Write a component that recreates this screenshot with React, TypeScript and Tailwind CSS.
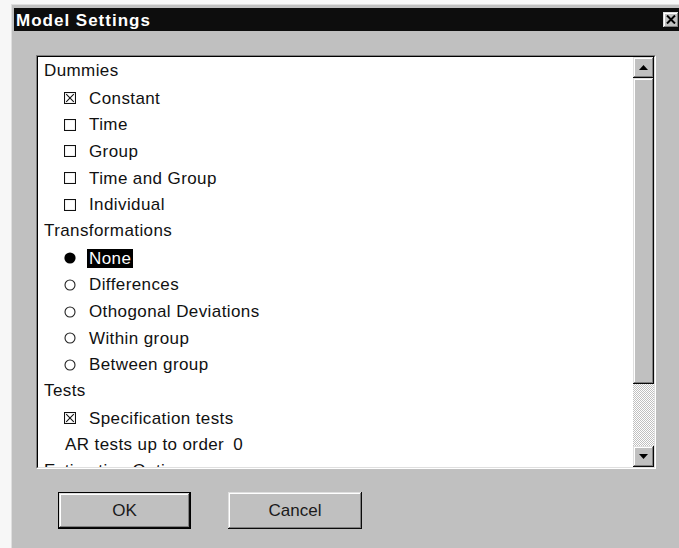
import React from "react";

type Row =
  | { kind: "head"; text: string }
  | { kind: "check"; text: string; on?: boolean }
  | { kind: "radio"; text: string; on?: boolean }
  | { kind: "order"; text: string; value: string };

const rows: Row[] = [
  { kind: "head", text: "Dummies" },
  { kind: "check", text: "Constant", on: true },
  { kind: "check", text: "Time" },
  { kind: "check", text: "Group" },
  { kind: "check", text: "Time and Group" },
  { kind: "check", text: "Individual" },
  { kind: "head", text: "Transformations" },
  { kind: "radio", text: "None", on: true },
  { kind: "radio", text: "Differences" },
  { kind: "radio", text: "Othogonal Deviations" },
  { kind: "radio", text: "Within group" },
  { kind: "radio", text: "Between group" },
  { kind: "head", text: "Tests" },
  { kind: "check", text: "Specification tests", on: true },
  { kind: "order", text: "AR tests up to order", value: "0" },
  { kind: "head", text: "Estimation Options" },
];

const raised =
  "bg-[#c0c0c0] shadow-[inset_-1px_-1px_#0a0a0a,inset_1px_1px_#dfdfdf,inset_-2px_-2px_#808080,inset_2px_2px_#ffffff]";

const CheckBox = ({ on }: { on?: boolean }) => (
  <svg width="12" height="12" viewBox="0 0 12 12" className="shrink-0">
    <rect x="0.5" y="0.5" width="11" height="11" fill="none" stroke="#111" strokeWidth="1.1" />
    {on && (
      <path d="M2.2 2.2 L9.8 9.8 M9.8 2.2 L2.2 9.8" stroke="#111" strokeWidth="1.1" fill="none" />
    )}
  </svg>
);

const Radio = ({ on }: { on?: boolean }) => (
  <svg width="12" height="12" viewBox="0 0 12 12" className="shrink-0">
    {on ? (
      <circle cx="6" cy="6" r="5.6" fill="#000" />
    ) : (
      <circle cx="6" cy="6" r="5" fill="none" stroke="#222" strokeWidth="1.1" />
    )}
  </svg>
);

const Arrow = ({ up }: { up?: boolean }) => (
  <svg width="9" height="5" viewBox="0 0 9 5">
    <polygon points={up ? "4.5,0 9,5 0,5" : "0,0 9,0 4.5,5"} fill="#000" />
  </svg>
);

const ListRow = ({ row }: { row: Row }) => {
  if (row.kind === "head") {
    return <div className="h-[26.7px] flex items-center pl-[6px]">{row.text}</div>;
  }
  if (row.kind === "order") {
    return (
      <div className="h-[26.7px] flex items-center pl-[27px]">
        <span>{row.text}</span>
        <span className="ml-[9px]">{row.value}</span>
      </div>
    );
  }
  const selected = row.kind === "radio" && row.on;
  return (
    <div className="h-[26.7px] flex items-center pl-[26px]">
      {row.kind === "check" ? <CheckBox on={row.on} /> : <Radio on={row.on} />}
      <span
        className={
          "ml-[11px] px-[2px] leading-[19px] " +
          (selected ? "bg-black text-white" : "")
        }
      >
        {row.text}
      </span>
    </div>
  );
};

export default function App() {
  return (
    <div className="w-[679px] h-[548px] overflow-hidden bg-[#f7f7f7] pt-[4px] pl-[11px] font-['Liberation_Sans',Arial,sans-serif]">
      <div className="w-[700px] h-[600px] bg-[#c0c0c0] border-l border-t border-[#dfdfdf] pt-[3px] pl-[2px]">
        {/* title bar */}
        <div className="w-[665px] h-[23px] bg-[#0d0d0d] flex items-center">
          <span className="pl-[2px] pt-[2px] text-white font-bold text-[17px] tracking-[1px] leading-none">
            Model Settings
          </span>
          <button className={"ml-auto w-[16px] h-[16px] flex items-center justify-center " + raised}>
            <svg width="10" height="9" viewBox="0 0 10 9">
              <path d="M1 0.5 L9 8.5 M9 0.5 L1 8.5" stroke="#000" strokeWidth="2" fill="none" />
            </svg>
          </button>
        </div>

        {/* settings list */}
        <div className="ml-[22px] mt-[24px] w-[620px] h-[414px] border border-t-[#808080] border-l-[#808080] border-b-white border-r-white">
          <div className="w-full h-full border border-t-black border-l-black border-b-[#dfdfdf] border-r-[#dfdfdf] bg-white flex">
            <div className="flex-1 overflow-hidden pt-[1px] text-[17px] tracking-[0.4px] text-[#111] leading-[26.7px]">
              {rows.map((r, i) => (
                <ListRow key={i} row={r} />
              ))}
            </div>
            <div className="w-[21px] flex flex-col">
              <div className={"h-[21px] flex items-center justify-center " + raised}>
                <Arrow up />
              </div>
              <div className={"h-[306px] " + raised} />
              <div className="flex-1 bg-[repeating-conic-gradient(#c0c0c0_0%_25%,#ffffff_0%_50%)] bg-[length:2px_2px]" />
              <div className={"h-[21px] flex items-center justify-center " + raised}>
                <Arrow />
              </div>
            </div>
          </div>
        </div>

        {/* dialog buttons */}
        <div className="mt-[23px] pl-[44px] flex gap-[37px] text-[17px] text-[#1a1a1a]">
          <div className="border border-black">
            <button className={"w-[131px] h-[35px] flex items-center justify-center " + raised}>
              OK
            </button>
          </div>
          <button className={"w-[134px] h-[37px] flex items-center justify-center " + raised}>
            Cancel
          </button>
        </div>
      </div>
    </div>
  );
}
